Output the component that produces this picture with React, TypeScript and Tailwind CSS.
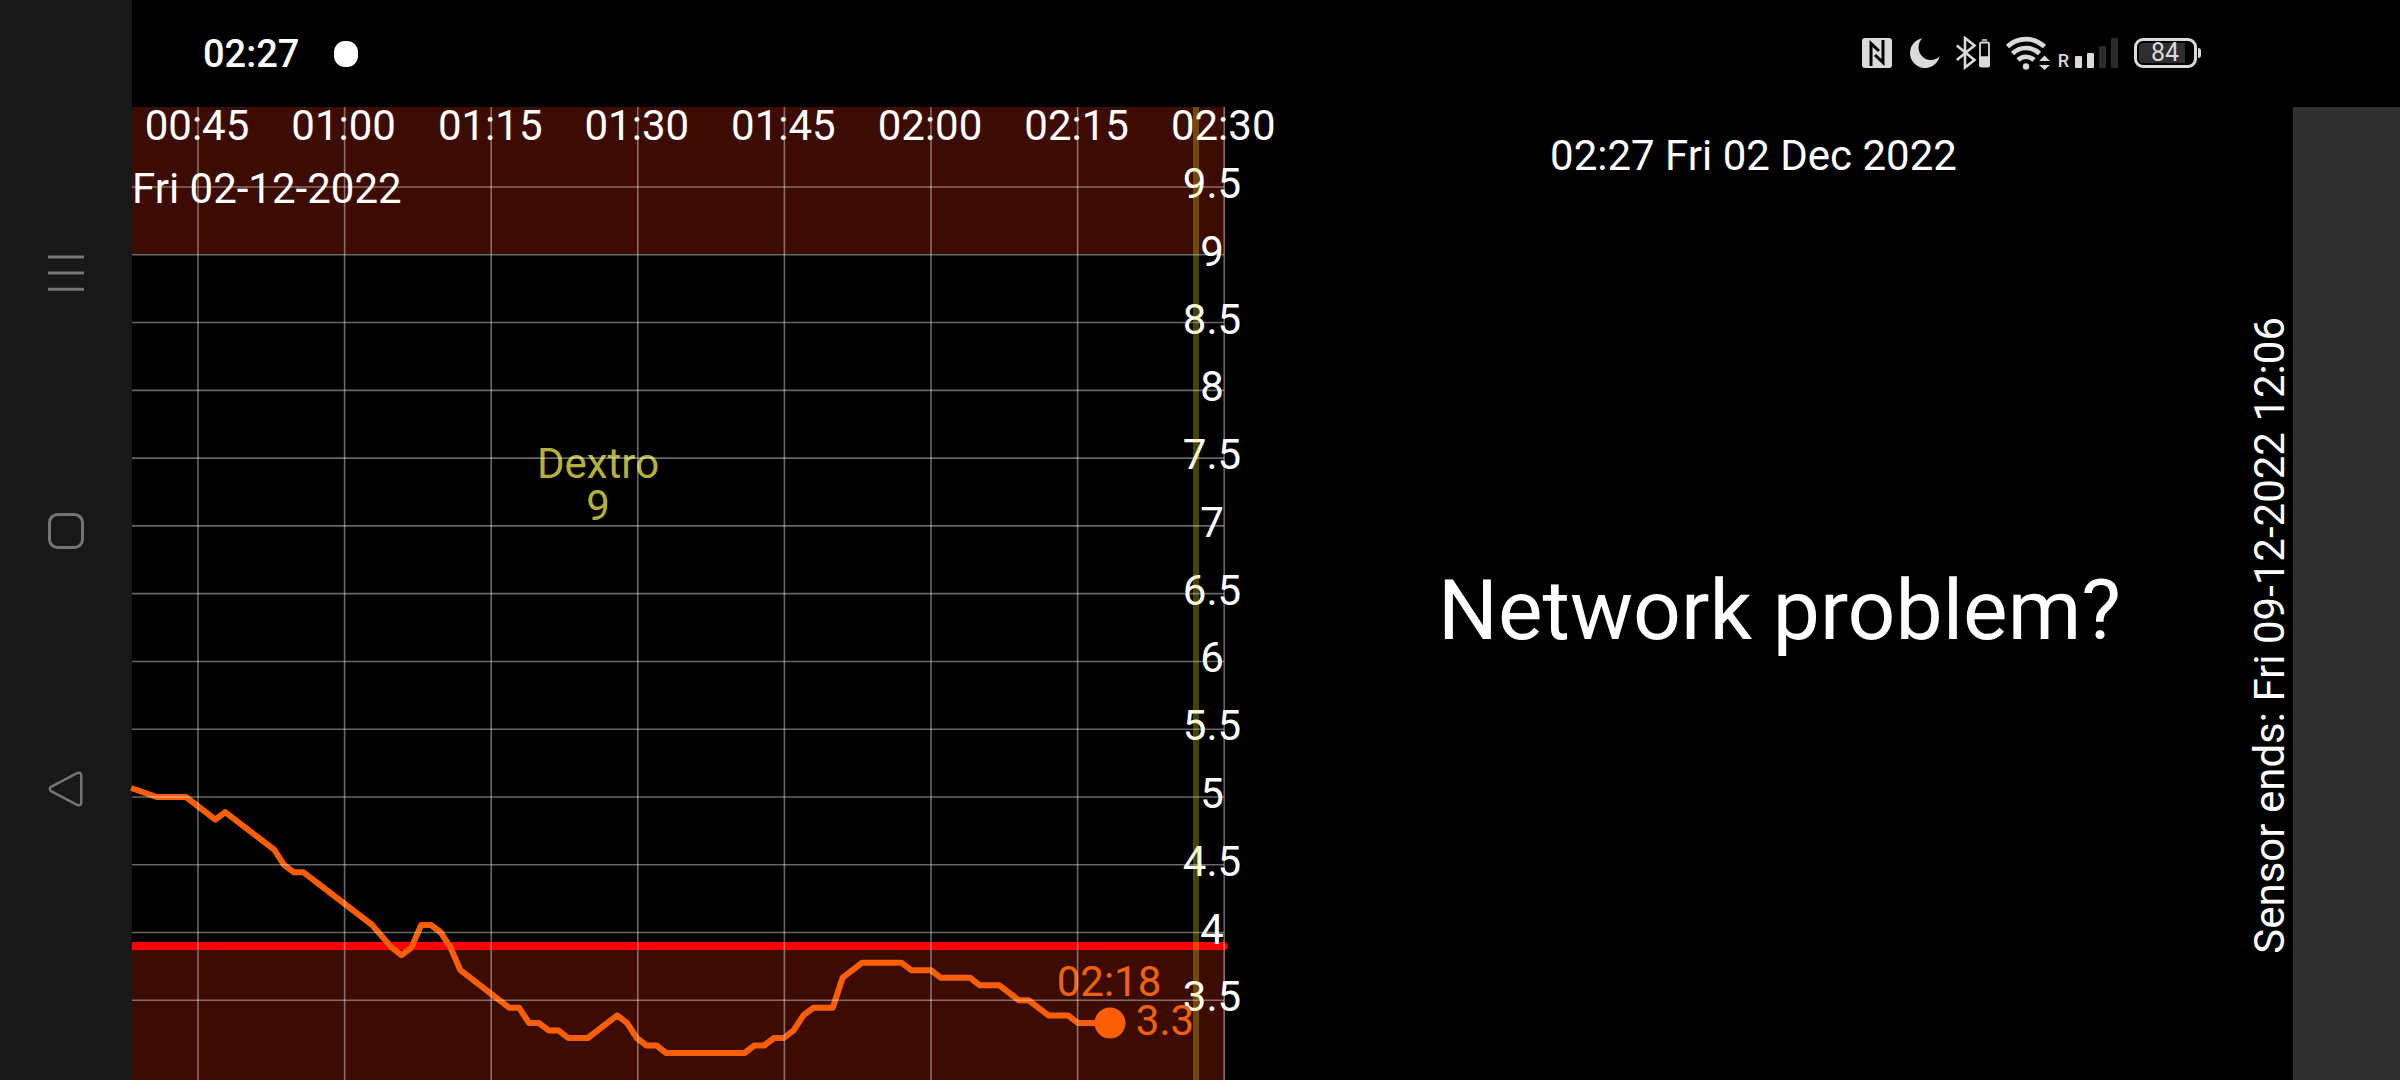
import type { ReactNode } from "react";

const START_X = 54;
const STEP_X = 9.8;

/** Glucose samples: [minutes after 00:43, mg/dL] */
const samples: [number, number][] = [
  [-5.6, 91.2], [-3, 90], [0, 90], [3, 87], [4, 88], [9, 83], [10, 81], [11, 80], [12, 80],
  [19, 73], [21, 70], [22, 69], [23, 70], [24, 73], [25, 73], [26, 72], [27, 70], [28, 67],
  [33, 62], [34, 62], [35, 60], [36, 60], [37, 59], [38, 59], [39, 58], [41, 58], [44, 61],
  [45, 60], [46, 58], [47, 57], [48, 57], [49, 56], [57, 56], [58, 57], [59, 57], [60, 58],
  [61, 58], [62, 59], [63, 61], [64, 62], [66, 62], [67, 66], [69, 68], [73, 68], [74, 67],
  [76, 67], [77, 66], [80, 66], [81, 65], [83, 65], [85, 63], [86, 63], [88, 61], [90, 61],
  [91, 60], [94, 60],
];

const curve = samples
  .map(([m, mg]) => `${(START_X + m * STEP_X).toFixed(1)},${(690 - (mg - 90) * 7.53).toFixed(1)}`)
  .join(" ");

const times = ["00:45", "01:00", "01:15", "01:30", "01:45", "02:00", "02:15", "02:30"];
const levels = [9.5, 9, 8.5, 8, 7.5, 7, 6.5, 6, 5.5, 5, 4.5, 4, 3.5];

const timeX = (i: number) => 66 + i * 146.6;
const levelY = (v: number) => 80 + (9.5 - v) * 135.55;

function Chart() {
  return (
    <svg
      viewBox="0 0 1092 973"
      className="block h-auto w-full overflow-visible"
      role="img"
      aria-label="Glucose over time"
      fontSize="42"
      textAnchor="middle"
    >
      <rect width="1093" height="147" fill="#3c0c02" />
      <rect y="839" width="1093" height="134" fill="#3c0c02" />
      <path d="M0 839H1092" stroke="#ff0000" strokeWidth="8" />
      <circle cx="1092" cy="839" r="4" fill="#ff0000" />
      <polyline
        points={curve}
        fill="none"
        stroke="#fb5e05"
        strokeWidth="6"
        strokeLinejoin="round"
      />
      <circle cx="978" cy="916" r="15.5" fill="#fb5e05" />
      <g fill="#b4b03c">
        <text x="466" y="371">Dextro</text>
        <text x="466" y="413">9</text>
      </g>
      <g fill="#ffffff">
        {times.map((t, i) => (
          <text key={t} x={timeX(i) - 1} y="33">{t}</text>
        ))}
        {levels.map((v) => (
          <text key={v} x="1080" y={levelY(v) + 11}>{v}</text>
        ))}
        <text x="0" y="96" textAnchor="start">Fri 02-12-2022</text>
      </g>
      <g fill="#f0620f">
        <text x="977" y="889">02:18</text>
        <text x="1033" y="928">3.3</text>
      </g>
      <g stroke="#ffffff" strokeOpacity="0.4" strokeWidth="1.6">
        {times.map((t, i) => (
          <path key={t} d={`M${timeX(i)} 0V973`} />
        ))}
        {levels.map((v) => (
          <path key={v} d={`M0 ${levelY(v)}H1092`} />
        ))}
      </g>
      <rect x="1061" width="6" height="973" fill="#e9dc28" fillOpacity="0.3" />
    </svg>
  );
}

function StatusIcons() {
  return (
    <div className="flex items-center pb-0.5 text-[#dadada]">
      <svg className="size-[30px]" viewBox="0 0 30 30" aria-label="NFC">
        <rect width="30" height="30" rx="3" fill="currentColor" />
        <path d="M9 28V5.5L17 13" fill="none" stroke="#000" strokeWidth="3" />
        <path d="M21 2V24.5L13 17" fill="none" stroke="#000" strokeWidth="3" />
      </svg>
      <svg className="ml-[18px] size-[30px]" viewBox="0 0 30 30" aria-label="Do not disturb">
        <path d="M12.5 0.3A15 15 0 1 0 29.6 18.6A12.5 12.5 0 0 1 12.5 0.3Z" fill="currentColor" />
      </svg>
      <svg className="ml-4 h-[34px] w-[34px]" viewBox="0 0 34 34" aria-label="Bluetooth">
        <path d="M0.8 9.5L18.5 24L9 31.5V2L18.5 9.5L0.8 24" fill="none" stroke="currentColor" strokeWidth="2.6" />
        <rect x="24" y="6.5" width="9" height="24" rx="1.5" fill="none" stroke="currentColor" strokeWidth="1.8" />
        <path d="M26 4H31M24 21H33V30H24Z" fill="currentColor" stroke="currentColor" strokeWidth="1.5" />
      </svg>
      <svg className="ml-4 h-[34px] w-11" viewBox="0 0 44 34" aria-label="Wi-Fi">
        <g fill="none" stroke="currentColor" strokeWidth="4.6">
          <path d="M1.5 10.5A27 27 0 0 1 38.5 10.5" />
          <path d="M6.5 17.5A19.5 19.5 0 0 1 33.5 17.5" />
          <path d="M12 24A11.5 11.5 0 0 1 28 24" />
        </g>
        <circle cx="20" cy="30.5" r="3.2" fill="currentColor" />
        <path d="M38.5 19.5L44 25H33ZM38.5 34L44 29H33Z" fill="currentColor" />
      </svg>
      <span className="mt-4 ml-2 text-[18px] leading-4 font-medium">R</span>
      <svg className="ml-1.5 h-[30px] w-[43px]" viewBox="0 0 43 30" aria-label="Mobile signal">
        <rect x="0" y="18" width="7" height="12" rx="1" fill="currentColor" />
        <rect x="12" y="15" width="7" height="15" rx="1" fill="currentColor" />
        <rect x="24" y="8" width="7" height="22" rx="1" fill="#2b2b2b" />
        <rect x="36" y="0" width="7" height="30" rx="1" fill="#2b2b2b" />
      </svg>
      <div className="ml-4 flex items-center">
        <div className="flex h-[30px] w-[63px] items-center rounded-[9px] border-[3px] border-current p-0.5">
          <span className="flex h-full w-[46px] items-center justify-end rounded-l-[4px] bg-[#2e2e2e] pr-1.5 text-[25px]">
            84
          </span>
        </div>
        <span className="ml-px h-2.5 w-[3px] rounded-r-sm bg-current" />
      </div>
    </div>
  );
}

function NavButton({ label, children }: { label: string; children: ReactNode }) {
  return (
    <button type="button" aria-label={label} className="flex h-[258px] w-full items-center justify-center">
      <svg
        className="size-9"
        viewBox="0 0 36 36"
        fill="none"
        stroke="#757575"
        strokeWidth="3"
        strokeLinejoin="round"
      >
        {children}
      </svg>
    </button>
  );
}

export default function App() {
  return (
    <div className="flex min-h-screen bg-black font-['Roboto',sans-serif] text-white">
      <nav className="flex w-[132px] shrink-0 flex-col items-center bg-[#181818] pt-36">
        <NavButton label="Recent apps">
          <path d="M0 1.9H36M0 18H36M0 34.3H36" />
        </NavButton>
        <NavButton label="Home">
          <rect x="1.5" y="1.5" width="33" height="33" rx="8" />
        </NavButton>
        <NavButton label="Back">
          <path d="M3 15.8L29.5 1.9Q33.3 1 33.3 5V31Q33.3 35 29.5 34.1L3 20.2Q0.5 18 3 15.8Z" strokeWidth="2.5" />
        </NavButton>
      </nav>
      <div className="flex min-w-0 flex-1 flex-col">
        <header className="flex h-[107px] items-center justify-between pr-[199px] pl-[71px]">
          <div className="flex items-center gap-[35px]">
            <time className="text-[38px] leading-none font-medium">02:27</time>
            <span className="h-[26px] w-6 rounded-[11px] bg-white" />
          </div>
          <StatusIcons />
        </header>
        <main className="flex flex-1">
          <section className="min-w-0 flex-[1092]">
            <Chart />
          </section>
          <section className="flex min-w-0 flex-[1069]">
            <div className="flex min-w-0 flex-1 flex-col items-center">
              <time className="mt-6 pl-[34px] text-[42px] leading-[50px]">02:27 Fri 02 Dec 2022</time>
              <h1 className="mt-[380px] pl-[86px] text-[84px] leading-[100px] whitespace-nowrap">Network problem?</h1>
            </div>
            <p className="mt-[210px] mr-0.5 rotate-180 self-start text-[42px] leading-[42px] whitespace-nowrap [writing-mode:vertical-rl]">
              Sensor ends: Fri 09-12-2022 12:06
            </p>
          </section>
          <aside className="w-[107px] shrink-0 bg-[#303030]" />
        </main>
      </div>
    </div>
  );
}
